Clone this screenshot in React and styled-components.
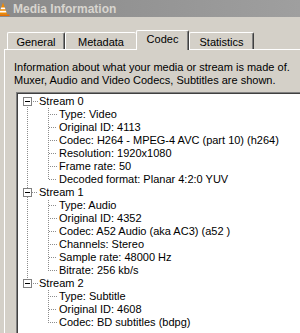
import React from "react";
import styled, { createGlobalStyle } from "styled-components";

const GlobalStyle = createGlobalStyle`
  html, body { margin: 0; padding: 0; background: #d4d0c8; }
  body { font-family: "Liberation Sans", Arial, sans-serif; font-size: 11px; }
`;

const Window = styled.div`
  width: 300px;
  height: 333px;
  overflow: hidden;
  background: #d4d0c8;
  display: flex;
  flex-direction: column;
`;

const TitleBar = styled.div`
  height: 17px;
  flex: none;
  display: flex;
  align-items: center;
  background: linear-gradient(to right, #8a8a8a, #9f9f9f);
  color: #d8d5cf;
  font: bold 12px "Liberation Sans", Arial, sans-serif;
  overflow: hidden;
  white-space: nowrap;
`;

const TitleIcon = styled.svg`
  flex: none;
  margin-left: -5px;
  margin-right: 2px;
`;

const Main = styled.div`
  flex: 1;
  display: flex;
  flex-direction: column;
  padding: 13px 0 0 4px;
  min-height: 0;
`;

const TabStrip = styled.div`
  display: flex;
  align-items: flex-end;
  height: 19px;
  padding-left: 3px;
  position: relative;
  z-index: 1;
`;

const Tab = styled.div`
  box-sizing: border-box;
  width: ${(p) => p.$w}px;
  height: ${(p) => (p.$selected ? 20 : 17)}px;
  margin-bottom: ${(p) => (p.$selected ? -1 : 0)}px;
  padding-top: ${(p) => (p.$selected ? 2 : 3)}px;
  background: #d4d0c8;
  border-top: 1px solid #ffffff;
  border-left: 1px solid #ffffff;
  border-right: ${(p) => (p.$noRight ? "none" : "1px solid #404040")};
  box-shadow: ${(p) => (p.$noRight ? "none" : "inset -1px 0 0 #808080")};
  border-top-left-radius: 2px;
  border-top-right-radius: 2px;
  display: flex;
  justify-content: center;
  line-height: 13px;
  color: #000;
  white-space: nowrap;
`;

const Panel = styled.div`
  flex: 1;
  display: flex;
  flex-direction: column;
  border-top: 1px solid #ffffff;
  border-left: 1px solid #ffffff;
  padding: 11px 0 0 9px;
  min-height: 0;
`;

const Description = styled.p`
  margin: 0;
  line-height: 13px;
  color: #000;
  white-space: nowrap;
`;

const TreeBox = styled.div`
  flex: 1;
  margin: 5px 0 0 2px;
  background: #ffffff;
  border-top: 1px solid #808080;
  border-left: 1px solid #808080;
  box-shadow: inset 1px 1px 0 #404040;
  padding: 2px 0 0 1px;
  overflow: hidden;
`;

const Row = styled.div`
  display: flex;
  align-items: flex-start;
  height: 13px;
  line-height: 13px;
  white-space: nowrap;
  color: #000;
`;

const Gutter = styled.svg`
  flex: none;
  display: block;
`;

const Label = styled.span`
  display: block;
`;

const DOT = "#8c8c8c";
const ORIGIN_X = 18;
const ORIGIN_Y = 95;
const ROW_H = 13;

function vDots(x, y0, y1, rowIndex, key) {
  const out = [];
  const top = ORIGIN_Y + rowIndex * ROW_H;
  for (let y = y0; y < y1; y++) {
    if ((ORIGIN_X + x + top + y) % 2 === 0) {
      out.push(<rect key={`${key}-${y}`} x={x} y={y} width="1" height="1" fill={DOT} />);
    }
  }
  return out;
}

function hDots(x0, x1, y, rowIndex, key) {
  const out = [];
  const top = ORIGIN_Y + rowIndex * ROW_H;
  for (let x = x0; x < x1; x++) {
    if ((ORIGIN_X + x + top + y) % 2 === 0) {
      out.push(<rect key={`${key}-${x}`} x={x} y={y} width="1" height="1" fill={DOT} />);
    }
  }
  return out;
}

function StreamRow({ label, rowIndex, first, last }) {
  return (
    <Row>
      <Gutter width="21" height="13" shapeRendering="crispEdges">
        {!first && vDots(9, 0, 2, rowIndex, "up")}
        {!last && vDots(9, 11, 13, rowIndex, "down")}
        <rect x="5.5" y="2.5" width="8" height="8" fill="#fff" stroke="#808080" />
        <rect x="7" y="6" width="5" height="1" fill="#000" />
        {hDots(14, 20, 6, rowIndex, "h")}
      </Gutter>
      <Label>{label}</Label>
    </Row>
  );
}

function ChildRow({ label, rowIndex, groupLast, lastChild }) {
  return (
    <Row>
      <Gutter width="41" height="13" shapeRendering="crispEdges">
        {!groupLast && vDots(9, 0, 13, rowIndex, "root")}
        {vDots(30, 0, lastChild ? 7 : 13, rowIndex, "v")}
        {hDots(31, 39, 6, rowIndex, "h")}
      </Gutter>
      <Label>{label}</Label>
    </Row>
  );
}

const streams = [
  {
    name: "Stream 0",
    items: [
      "Type: Video",
      "Original ID: 4113",
      "Codec: H264 - MPEG-4 AVC (part 10) (h264)",
      "Resolution: 1920x1080",
      "Frame rate: 50",
      "Decoded format: Planar 4:2:0 YUV",
    ],
  },
  {
    name: "Stream 1",
    items: [
      "Type: Audio",
      "Original ID: 4352",
      "Codec: A52 Audio (aka AC3) (a52 )",
      "Channels: Stereo",
      "Sample rate: 48000 Hz",
      "Bitrate: 256 kb/s",
    ],
  },
  {
    name: "Stream 2",
    items: ["Type: Subtitle", "Original ID: 4608", "Codec: BD subtitles (bdpg)"],
  },
];

const tabs = [
  { label: "General", w: 58 },
  { label: "Metadata", w: 71, noRight: true },
  { label: "Codec", w: 53, selected: true },
  { label: "Statistics", w: 65 },
];

function VlcIcon() {
  return (
    <TitleIcon width="16" height="16" viewBox="0 0 16 16">
      <path d="M1.5 13.5 h13 v1.5 h-13 z" fill="#e86f00" />
      <path d="M8 1.5 L12.2 13.5 H3.8 Z" fill="#f28a00" />
      <path d="M6.2 6.4 H9.8 L10.4 8.2 H5.6 Z" fill="#ffffff" />
      <path d="M5.1 9.8 H10.9 L11.5 11.6 H4.5 Z" fill="#ffffff" />
    </TitleIcon>
  );
}

export default function App() {
  let rowIndex = 0;
  const rows = [];
  streams.forEach((s, gi) => {
    const groupLast = gi === streams.length - 1;
    rows.push(
      <StreamRow
        key={s.name}
        label={s.name}
        rowIndex={rowIndex++}
        first={gi === 0}
        last={groupLast}
      />
    );
    s.items.forEach((it, ci) => {
      rows.push(
        <ChildRow
          key={`${s.name}-${ci}`}
          label={it}
          rowIndex={rowIndex++}
          groupLast={groupLast}
          lastChild={ci === s.items.length - 1}
        />
      );
    });
  });

  return (
    <>
      <GlobalStyle />
      <Window>
        <TitleBar>
          <VlcIcon />
          Media Information
        </TitleBar>
        <Main>
          <TabStrip>
            {tabs.map((t) => (
              <Tab key={t.label} $w={t.w} $selected={t.selected} $noRight={t.noRight}>
                {t.label}
              </Tab>
            ))}
          </TabStrip>
          <Panel>
            <Description>
              Information about what your media or stream is made of.
              <br />
              Muxer, Audio and Video Codecs, Subtitles are shown.
            </Description>
            <TreeBox>{rows}</TreeBox>
          </Panel>
        </Main>
      </Window>
    </>
  );
}
